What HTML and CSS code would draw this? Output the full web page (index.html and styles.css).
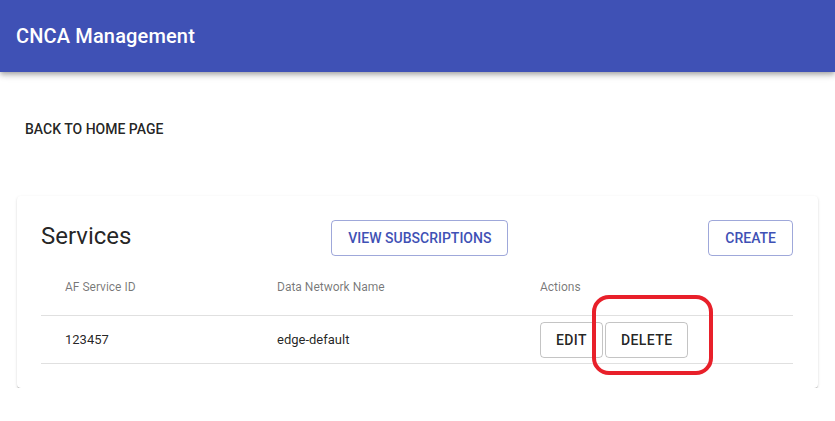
FILE: index.html
```html
<!DOCTYPE html>
<html>
<head>
<meta charset="utf-8">
<link rel="stylesheet" href="styles.css">
</head>
<body>
<header class="appbar">
  <h1 class="title">CNCA Management</h1>
</header>
<main class="content">
  <div class="back-row">
    <button class="btn btn-text">Back to Home Page</button>
  </div>
  <section class="card">
    <div class="card-head">
      <h2 class="card-title">Services</h2>
      <button class="btn btn-outline-primary">View Subscriptions</button>
      <button class="btn btn-outline-primary">Create</button>
    </div>
    <div class="table">
      <div class="tr th">
        <div class="cell">AF Service ID</div>
        <div class="cell">Data Network Name</div>
        <div class="cell">Actions</div>
      </div>
      <div class="tr">
        <div class="cell">123457</div>
        <div class="cell">edge-default</div>
        <div class="cell actions">
          <button class="btn btn-outline">Edit</button>
          <button class="btn btn-outline">Delete</button>
          <span class="annotation"></span>
        </div>
      </div>
    </div>
  </section>
</main>
</body>
</html>
```

FILE: styles.css
```css
* { box-sizing: border-box; }
html, body {
  margin: 0;
  padding: 0;
  background: #fff;
  font-family: Roboto, "Liberation Sans", Arial, sans-serif;
  color: rgba(0,0,0,0.87);
}
.appbar {
  height: 72px;
  background: #3f51b5;
  display: flex;
  align-items: center;
  padding: 0 16px;
  box-shadow: 0 2px 4px -1px rgba(0,0,0,0.2), 0 4px 5px 0 rgba(0,0,0,0.14), 0 1px 10px 0 rgba(0,0,0,0.12);
}
.title {
  margin: 0;
  color: #fff;
  font-size: 20px;
  font-weight: 500;
  line-height: 1.6;
  letter-spacing: 0.0075em;
}
.content {
  padding: 39px 17px 0 17px;
}
.back-row {
  display: flex;
  margin-bottom: 49px;
}
.btn {
  font-family: Roboto, "Liberation Sans", Arial, sans-serif;
  font-size: 14px;
  font-weight: 500;
  line-height: 24px;
  letter-spacing: 0;
  text-transform: uppercase;
  border-radius: 4px;
  background: transparent;
  cursor: pointer;
  margin: 0;
}
.btn-text {
  border: none;
  padding: 6px 8px;
  color: rgba(0,0,0,0.87);
}
.btn-outline-primary {
  border: 1px solid rgba(63,81,181,0.5);
  color: #3f51b5;
  padding: 5px 16px;
}
.btn-outline {
  border: 1px solid rgba(0,0,0,0.23);
  color: rgba(0,0,0,0.87);
  padding: 5px 15px;
  letter-spacing: 0.02857em;
}
.card {
  background: #fff;
  border-radius: 4px;
  box-shadow: 0 2px 1px -1px rgba(0,0,0,0.2), 0 1px 1px 0 rgba(0,0,0,0.14), 0 1px 3px 0 rgba(0,0,0,0.12);
  padding: 24px 25px 24px 24px;
}
.card-head {
  display: flex;
  justify-content: space-between;
  align-items: center;
  height: 36px;
}
.card-title {
  margin: 0 0 4px 0;
  font-size: 24px;
  font-weight: 400;
  line-height: 32px;
}
.tr {
  display: grid;
  grid-template-columns: 212px 263px 1fr;
  border-bottom: 1px solid rgba(224,224,224,1);
  height: 48px;
  align-items: center;
}
.tr.th {
  height: 60px;
  color: rgba(0,0,0,0.54);
  padding-top: 3px;
}
.tr.th .cell { font-size: 12px; }
.cell {
  padding-left: 24px;
  font-size: 13px;
  line-height: 18px;
}
.actions {
  display: flex;
  align-items: center;
  gap: 2px;
  position: relative;
}
.annotation {
  position: absolute;
  left: 76px;
  top: -27px;
  width: 121px;
  height: 80px;
  border: 4px solid #e8202a;
  border-radius: 17px;
  pointer-events: none;
}
```
